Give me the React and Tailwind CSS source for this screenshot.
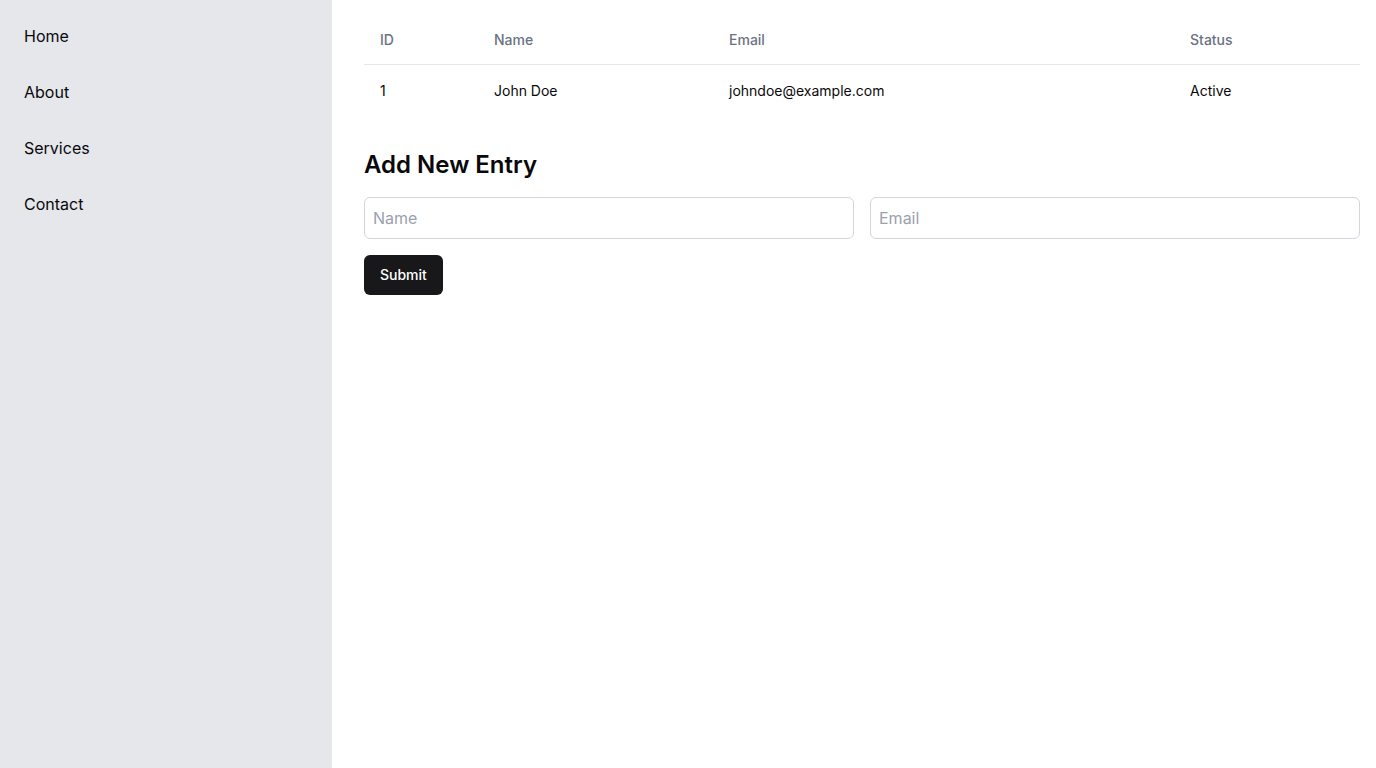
export default function App() {
  const navItems = ['Home', 'About', 'Services', 'Contact']
  const rows = [{ id: 1, name: 'John Doe', email: 'johndoe@example.com', status: 'Active' }]

  return (
    <div className="flex min-h-screen bg-white text-[#09090b]" style={{ fontFamily: 'Inter, "Noto Sans", sans-serif' }}>
      <aside className="w-[332px] shrink-0 bg-gray-200 pt-2">
        <nav className="flex flex-col">
          {navItems.map((item) => (
            <a key={item} href="#" className="px-6 py-4 text-base leading-6 text-[#09090b]">
              {item}
            </a>
          ))}
        </nav>
      </aside>

      <main className="flex-1 pt-4 pr-4 pl-8">
        <table className="w-full table-fixed text-sm">
          <thead>
            <tr className="border-b border-gray-200">
              <th className="h-12 w-[114px] px-4 text-left align-middle font-medium text-gray-500">ID</th>
              <th className="h-12 w-[235px] px-4 text-left align-middle font-medium text-gray-500">Name</th>
              <th className="h-12 w-[461px] px-4 text-left align-middle font-medium text-gray-500">Email</th>
              <th className="h-12 px-4 text-left align-middle font-medium text-gray-500">Status</th>
            </tr>
          </thead>
          <tbody>
            {rows.map((row) => (
              <tr key={row.id}>
                <td className="p-4 leading-5">{row.id}</td>
                <td className="p-4 leading-5">{row.name}</td>
                <td className="p-4 leading-5">{row.email}</td>
                <td className="p-4 leading-5">{row.status}</td>
              </tr>
            ))}
          </tbody>
        </table>

        <h2 className="mt-8 mb-4 text-2xl leading-8 font-semibold">Add New Entry</h2>
        <form className="flex flex-col items-start gap-4">
          <div className="grid w-full grid-cols-2 gap-4">
            <input
              placeholder="Name"
              className="h-[42px] rounded-md border border-gray-300 px-2 text-base placeholder:text-gray-400 outline-none"
            />
            <input
              placeholder="Email"
              className="h-[42px] rounded-md border border-gray-300 px-2 text-base placeholder:text-gray-400 outline-none"
            />
          </div>
          <button type="button" className="h-10 rounded-md bg-[#18181b] px-4 text-sm font-medium text-white">
            Submit
          </button>
        </form>
      </main>
    </div>
  )
}
